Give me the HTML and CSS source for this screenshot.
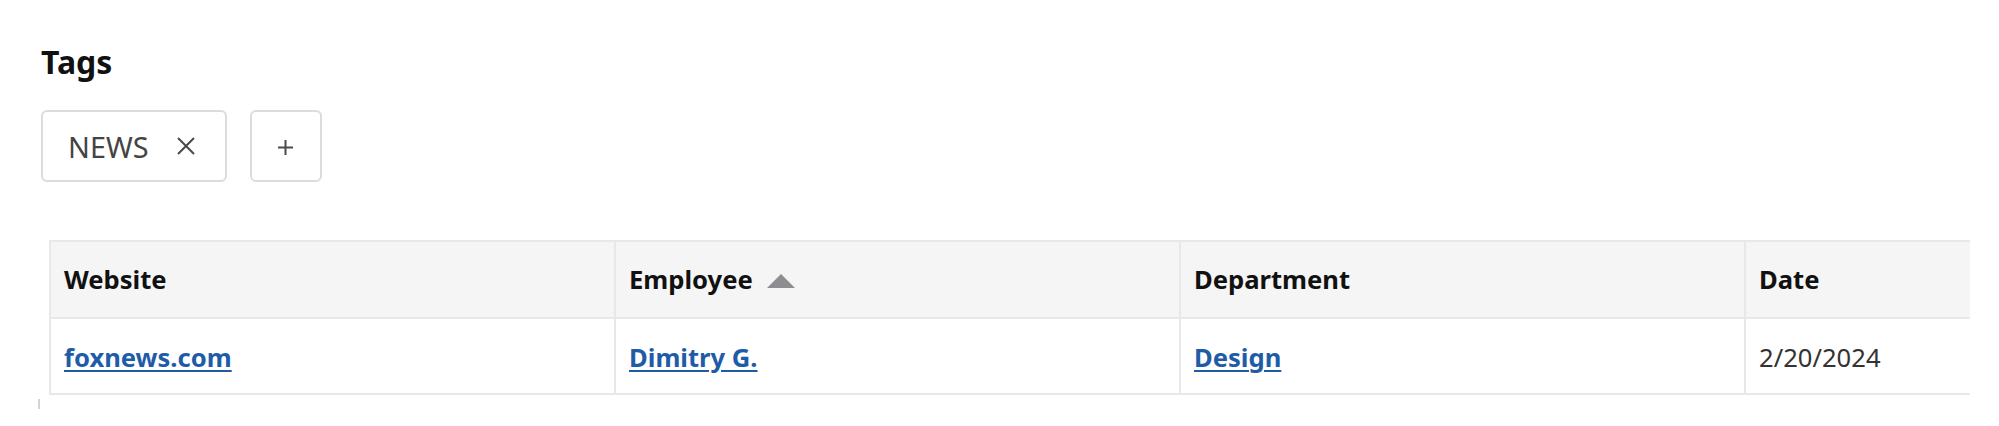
FILE: index.html
```html
<!DOCTYPE html>
<html lang="en">
<head>
<meta charset="utf-8">
<title>Tags</title>
<link rel="stylesheet" href="styles.css">
</head>
<body>
<main class="page">
  <h2 class="title">Tags</h2>
  <div class="tags">
    <span class="tag">NEWS
      <svg class="tag-x" width="18" height="18" viewBox="0 0 18 18"><path d="M1 1L17 17M17 1L1 17" stroke="#4a4a4a" stroke-width="2" fill="none"/></svg>
    </span>
    <button class="tag-add" type="button">
      <svg width="15" height="15" viewBox="0 0 15 15"><path d="M7.5 0V15M0 7.5H15" stroke="#4a4a4a" stroke-width="2" fill="none"/></svg>
    </button>
  </div>
  <div class="table-wrap">
    <table class="grid">
      <colgroup><col class="c"><col class="c"><col class="c"><col class="c"></colgroup>
      <thead>
        <tr>
          <th>Website</th>
          <th>Employee <svg class="sort" width="28" height="14" viewBox="0 0 28 14"><path d="M14 0L28 14H0Z" fill="#8d8d92"/></svg></th>
          <th>Department</th>
          <th>Date</th>
        </tr>
      </thead>
      <tbody>
        <tr>
          <td><a href="#">foxnews.com</a></td>
          <td><a href="#">Dimitry G.</a></td>
          <td><a href="#">Design</a></td>
          <td class="date">2/20/2024</td>
        </tr>
      </tbody>
    </table>
  </div>
  <div class="tick"></div>
</main>
</body>
</html>
```

FILE: styles.css
```css
* { box-sizing: border-box; }
html, body { margin: 0; padding: 0; background: #fff; }
body { font-family: "Noto Sans", "Open Sans", "DejaVu Sans", sans-serif; color: #111; }

.page { padding: 42px 0 0 41px; }

.title {
  margin: 0;
  font-size: 32px;
  line-height: 40px;
  font-weight: 700;
  color: #111;
}

.tags {
  display: flex;
  gap: 23px;
  margin-top: 28px;
}

.tag {
  display: inline-flex;
  align-items: center;
  gap: 28px;
  height: 72px;
  padding: 0 30px 0 25px;
  border: 2px solid #dcdcdc;
  border-radius: 6px;
  font-size: 28.8px;
  color: #444;
  background: #fff;
}

.tag-x { display: block; }

.tag-add {
  display: flex;
  align-items: center;
  justify-content: center;
  width: 72px;
  height: 72px;
  padding: 0;
  border: 2px solid #dcdcdc;
  border-radius: 6px;
  background: #fff;
}
.tag-add svg { display: block; margin-top: 2px; margin-left: -1px; }

.table-wrap {
  margin: 58px 29px 0 8px;
  overflow: hidden;
}

.grid {
  border-collapse: collapse;
  table-layout: fixed;
  width: 2262px;
  font-size: 25.6px;
}
.grid col.c { width: 565px; }

.grid th, .grid td {
  border: 2px solid #e8e8e8;
  text-align: left;
  padding: 0 13px;
  white-space: nowrap;
}
.grid th {
  height: 77px;
  background: #f5f5f5;
  font-weight: 700;
  color: #111;
  vertical-align: middle;
}
.grid td {
  height: 76px;
  vertical-align: middle;
  padding-top: 2px;
}
.grid a {
  color: #1f5ca8;
  font-weight: 700;
  text-decoration: underline;
  text-decoration-thickness: 2px;
  text-underline-offset: 3px;
}
.grid .date { color: #333; }

.sort { margin-left: 8px; vertical-align: 1px; }

.tick {
  width: 2px;
  height: 10px;
  margin: 4px 0 0 -3px;
  background: #d4d4d4;
}
```
